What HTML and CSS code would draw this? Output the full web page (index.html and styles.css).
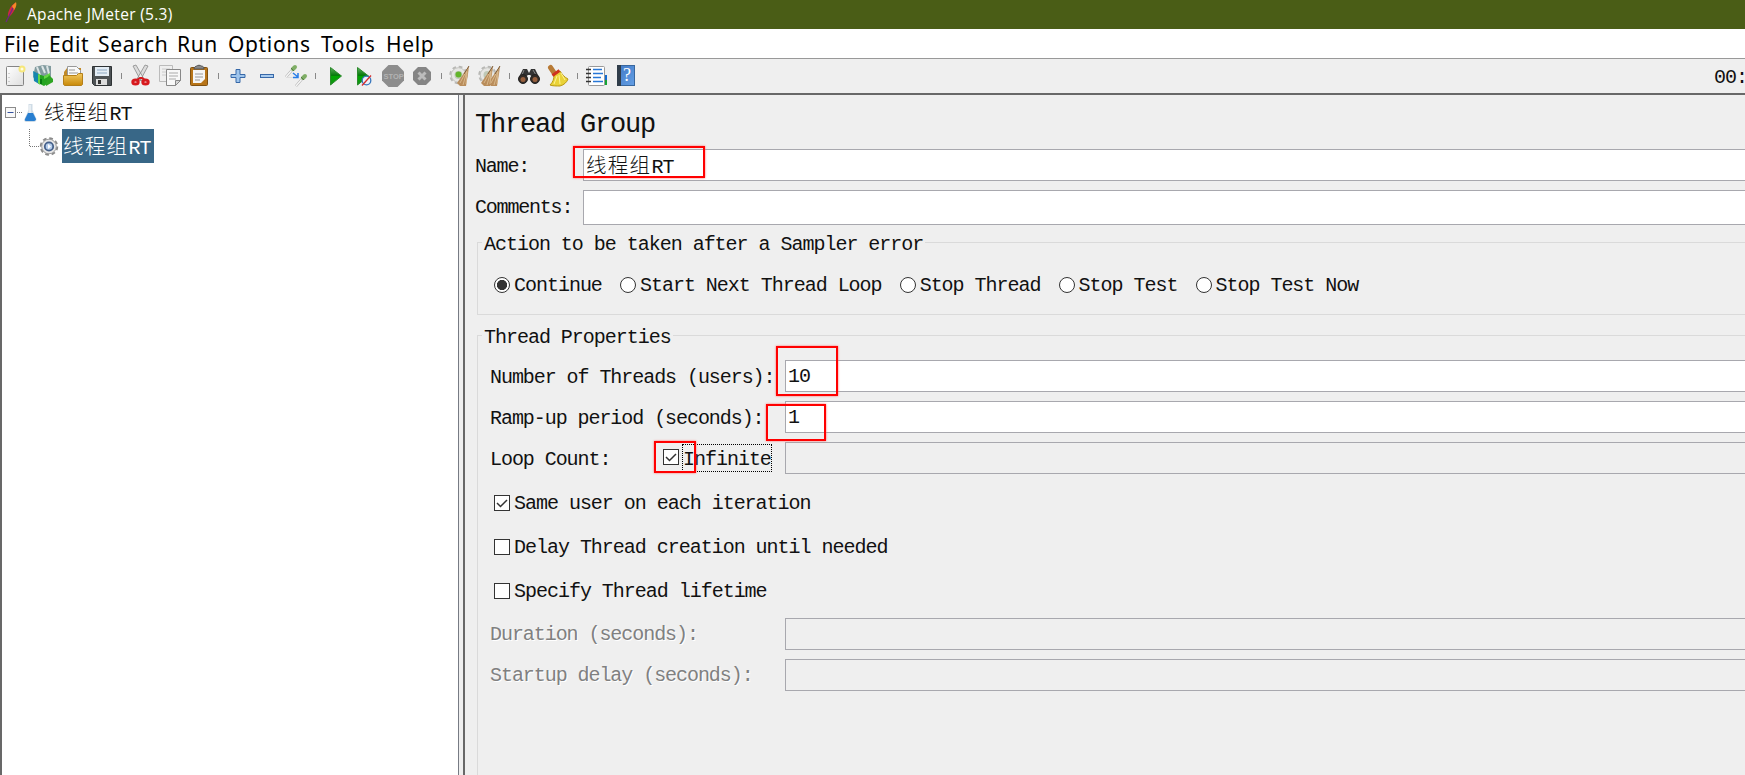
FILE: index.html
```
<!DOCTYPE html>
<html lang="zh-CN">
<head>
<meta charset="utf-8">
<title>Apache JMeter (5.3)</title>
<link rel="stylesheet" href="styles.css">
</head>
<body>
<div class="window">
  <header class="titlebar">
    <svg class="feather" width="14" height="22" viewBox="0 0 14 22"><path d="M3 15C2 10 6 3 10 1c2 3-1 9-5 13z" fill="#d02843"/><path d="M7 4l4-4c1 3 0 5-2 8z" fill="#f58a25"/><path d="M1 20L8 6" stroke="#6d2682" stroke-width="1.2"/></svg>
    <span>Apache JMeter (5.3)</span>
  </header>
  <nav class="menubar">
    <span class="m-file">File</span><span class="m-edit">Edit</span><span class="m-search">Search</span><span class="m-run">Run</span><span class="m-options">Options</span><span class="m-tools">Tools</span><span class="m-help">Help</span>
  </nav>
  <div class="toolbar">
    <svg class="icons" width="660" height="34" viewBox="0 59 660 34">
      <defs>
        <linearGradient id="paper" x2="1" y2="1"><stop stop-color="#fff"/><stop offset="1" stop-color="#dedede"/></linearGradient>
        <linearGradient id="play" x2="0" y2="1"><stop stop-color="#5faf5f"/><stop offset=".45" stop-color="#06780b"/><stop offset=".5" stop-color="#00a800"/><stop offset="1" stop-color="#169018"/></linearGradient>
        <linearGradient id="gold" x2="0" y2="1"><stop stop-color="#f2c860"/><stop offset="1" stop-color="#c88908"/></linearGradient>
        <linearGradient id="book" x2="1" y2="1"><stop stop-color="#3f78c5"/><stop offset="1" stop-color="#649fe5"/></linearGradient>
      </defs>
      <!-- new -->
      <rect x="6.500" y="66.500" width="17" height="19" rx="1" fill="url(#paper)" stroke="#858585"/><path d="M9 73v10" stroke="#aaa" stroke-dasharray="1 3"/><circle cx="22" cy="69" r="3.500" fill="#f6e77b"/><circle cx="22" cy="69" r="1.500" fill="#fffce0"/>
      <!-- templates -->
      <path d="M35 67l8-2 8 1v12l-13 4-5-5z" fill="#829b9f"/><path d="M37 67l3 8M42 66l3 7M47 66l2 8" stroke="#dce4e6" stroke-width="2"/><path d="M33 71l6 3v10l-5-3z" fill="#1686ae"/><path d="M38 74l6 2 6-2v8l-6 4-6-3z" fill="#25a421"/><path d="M38 74l2 1v10l-2-2zM44 76l6-3v3l-6 3z" fill="#65d646"/><path d="M40 79h2v5h-2z" fill="#087a11"/><path d="M49 75l4 4v3l-7 4v-3z" fill="#2ea523"/>
      <!-- open -->
      <path d="M64 72l3-4h14v14H64z" fill="#c18a28"/><path d="M67.500 66.500h9l4 4v7h-13z" fill="#fafafa" stroke="#999"/><path d="M69 70h6m-6 3h9" stroke="#999"/><path d="M63.500 75.500h13l2-2h4v11l-1 1h-17l-1-1z" fill="url(#gold)" stroke="#b5801a"/>
      <!-- save -->
      <path d="M92.500 66.500h19v19h-17l-2-2z" fill="#4d5255" stroke="#2e3234"/><rect x="95" y="67" width="14" height="9" fill="#e4edf5"/><path d="M97 70h10m-10 3h10" stroke="#8fa9c2"/><rect x="96" y="79" width="11" height="6" fill="#ddd"/><rect x="98" y="80" width="3" height="4" fill="#333"/>
      <!-- cut -->
      <path d="M133 66l3-1 8 14-3 2zM148 66l-3-1-8 14 3 2z" fill="#dcdcdc" stroke="#8a8a8a" stroke-width=".8"/><g fill="none" stroke="#d7191e" stroke-width="3"><ellipse cx="135.500" cy="82" rx="2.700" ry="2"/><ellipse cx="145.500" cy="82" rx="2.700" ry="2"/><path d="M137 80l3-2h2l3 2" stroke-width="2"/></g>
      <!-- copy -->
      <path d="M159.500 65.500h13v16h-13z" fill="#efefef" stroke="#bbb"/><path d="M162 69h8m-8 3h5m-5 3h4" stroke="#ccc"/><path d="M166.500 69.500h14v11l-5 5h-9z" fill="#f8f8f8" stroke="#888"/><path d="M169 73h9m-9 3h9m-9 3h7" stroke="#aaa"/><path d="M175.500 85.500v-5h5z" fill="#d6d6d6" stroke="#888"/>
      <!-- paste -->
      <rect x="190.500" y="67.500" width="17" height="18" rx="1" fill="#b87519" stroke="#805111"/><path d="M193 70h12v9l-4 4h-8z" fill="#f5f5f5"/><path d="M195 74h8m-8 3h8m-8 3h5" stroke="#999"/><path d="M194 69c0-2 2-3 3-3 0-1 4-1 4 0 2 0 3 1 3 3z" fill="#888" stroke="#555"/>
      <!-- expand / collapse -->
      <path d="M236 69.500h4v5h5v3h-5v5h-4v-5h-5v-3h5z" fill="#9fc5ec" stroke="#3768a8"/><rect x="260.500" y="74.500" width="13" height="3" fill="#a9cbee" stroke="#3768a8"/>
      <!-- toggle -->
      <g id="pipette"><path d="M286 77l6-7" stroke="#a8a8a8" stroke-width="2.500"/><path d="M286 77l6-7" stroke="#f6f6f6" stroke-width="1.500"/><path d="M293 69l2-2" stroke="#7fae65" stroke-width="4" stroke-linecap="round"/><path d="M291 68l3 3" stroke="#567c48"/></g><use href="#pipette" x="10" y="9"/><path d="M286 77.500h8" stroke="#ddd"/><path d="M293 73l5 4m0-4v4.500h-5" stroke="#287ee8" stroke-width="1.500" fill="none"/>
      <!-- run buttons -->
      <path d="M330.500 67.500l11 8.500-11 9z" fill="url(#play)" stroke="#2c8b2c"/><path d="M357.500 67.500l11 8.500-11 9z" fill="url(#play)" stroke="#2c8b2c"/><circle cx="366.500" cy="80.500" r="4.300" fill="#ecf2fa" stroke="#3776bd" stroke-width="1.300"/><path d="M362 85.500l9-10" stroke="#d72b2b" stroke-width="1.300"/>
      <path d="M388.500 65h9l6.500 6.500v9l-6.500 6.500h-9l-6.500-6.500v-9z" fill="#8d8d8d"/><text x="383.500" y="79" class="stop">STOP</text>
      <path d="M418 67h8l5 5v8l-5 5h-8l-5-5v-8z" fill="#858585"/><path d="M418.500 72.500l7 7m0-7l-7 7" stroke="#bcbcbc" stroke-width="3"/>
      <!-- clear and clear all -->
      <g id="gearbase"><circle cx="458.500" cy="75" r="8" fill="none" stroke="#b8b8b5" stroke-width="2.500" stroke-dasharray="3.600 2.680"/><circle cx="458.500" cy="75" r="7.300" fill="#e6e6e3" stroke="#c4c4c0"/><circle cx="458.500" cy="75" r="4" fill="#bfc8b6"/></g><circle cx="458.500" cy="74.500" r="3" fill="#62b52a"/>
      <g id="broom"><path d="M469 66l-5 7-7 10 3 3h6l2-12z" fill="#b98d5b"/><path d="M468 68l-8 15m7-12l-4 14m4-13l-1 12" stroke="#dfc297" stroke-width=".8"/><path d="M469 66l-5 8" stroke="#805e38"/></g>
      <use href="#gearbase" x="29"/><use href="#broom" x="31"/><use href="#broom" x="24"/>
      <!-- search -->
      <path d="M519 77l4-8 4 0 2 4 2-4h4l4 8-5 1-4-3h-2l-4 3z" fill="#343434"/><path d="M524 70l-2 5m11-5l3 5" stroke="#888"/><circle cx="523" cy="79" r="4.500" fill="#342c27" stroke="#222"/><circle cx="535" cy="79" r="4.500" fill="#342c27" stroke="#222"/><circle cx="523" cy="79.500" r="2.500" fill="#98603d"/><circle cx="535" cy="79.500" r="2.500" fill="#98603d"/>
      <!-- reset search -->
      <path d="M550.500 67.500l4 6" stroke="#b87a35" stroke-width="5" stroke-linecap="round"/><path d="M554 75l6-4c2 3 4 6 8 8-1 3-4 6-8 7-3 0-8 0-10-1 3-3 4-6 4-10z" fill="#e9d238" stroke="#ba9914"/><path d="M557 76l-3 8m5-9l1 9m1-11l4 7" stroke="#fff392"/><path d="M552.500 75.500l7-5" stroke="#cf321e" stroke-width="3"/>
      <!-- function helper -->
      <path d="M604 75h3v5h-3z" fill="#126bd1"/><path d="M604 80h3v5h-3z" fill="#15a335"/><rect x="588.500" y="66.500" width="16" height="19" rx="1" fill="#fff" stroke="#999"/><path d="M593 69.500h9m-9 4h10m-10 4h8m-8 4h10" stroke="#2877d6" stroke-width="1.500"/><path d="M586 69.500h5m-5 4h5m-5 4h5m-5 4h5" stroke="#333" stroke-width="1.500"/>
      <!-- help -->
      <rect x="617.500" y="65.500" width="17" height="20" fill="url(#book)" stroke="#38679e"/><path d="M617 65h4v21h-4z" fill="#303d4a"/><text x="623" y="81" class="q">?</text>
      <path d="M121.500 73v6m97-6v6m97-6v6m126-6v6m68-6v6m68-6v6" stroke="#888"/>
    </svg>
    <span class="clock">00:</span>
  </div>
  <main class="work">
    <aside class="tree">
      <div class="node root">
        <svg width="38" height="34" viewBox="0 0 38 34"><path d="M15 17.500h5" stroke="#777" stroke-dasharray="1 1"/><rect x="3.500" y="12.500" width="10" height="10" fill="#f8f8f8" stroke="#8b8b8b"/><path d="M5.500 17.500h6" stroke="#33519f"/><path d="M26.500 9h4v6l4 9q0 3-3 3h-7q-3 0-2-3l4-9z" fill="#cfdce6"/><path d="M26 18h5l3 6q0 2-3 2h-6q-3 0-2-2z" fill="#287ed0"/><path d="M28 10v8" stroke="#fff"/></svg>
        <span class="label"><span class="cjk">线程组</span>RT</span>
      </div>
      <div class="node child">
        <svg width="60" height="34" viewBox="0 0 60 34"><path d="M27.500 0v17.500h11" fill="none" stroke="#777" stroke-dasharray="1 1"/><circle cx="47" cy="17.500" r="8" fill="none" stroke="#8b8b8b" stroke-width="2.500" stroke-dasharray="3.600 2.680"/><circle cx="47" cy="17.500" r="7.300" fill="#e7e7e7" stroke="#a0a0a0"/><circle cx="47" cy="17.500" r="4.200" fill="#b5cdeb" stroke="#45608a" stroke-width="1.800"/><path d="M46 15l3 2.500-3 2.500z" fill="#fff"/></svg>
        <span class="label selected"><span class="cjk">线程组</span>RT</span>
      </div>
    </aside>
    <div class="divider"></div>
    <section class="panel">
      <h1>Thread Group</h1>
      <div class="row name"><label>Name:</label><div class="field"><span class="value"><span class="cjk">线程组</span>RT</span></div></div>
      <div class="row comments"><label>Comments:</label><div class="field"></div></div>
      <div class="group action">
        <div class="legend"><span>Action to be taken after a Sampler error</span></div>
        <div class="radios">
          <span class="opt"><i class="radio on"></i>Continue</span><span class="opt"><i class="radio"></i>Start Next Thread Loop</span><span class="opt"><i class="radio"></i>Stop Thread</span><span class="opt"><i class="radio"></i>Stop Test</span><span class="opt"><i class="radio"></i>Stop Test Now</span>
        </div>
      </div>
      <div class="group props">
        <div class="legend"><span>Thread Properties</span></div>
        <div class="fields">
          <div class="prow"><label>Number of Threads (users):</label><div class="field"><span class="value">10</span></div></div>
          <div class="prow"><label>Ramp-up period (seconds):</label><div class="field"><span class="value">1</span></div></div>
          <div class="prow"><label>Loop Count:</label><span class="opt infinite"><i class="box"><svg width="14" height="14"><path d="M2 7l3.500 3.500L12 4" fill="none" stroke="#333" stroke-width="1.500"/></svg></i><span class="focus">Infinite</span></span><div class="field off"></div></div>
        </div>
        <div class="checks">
          <span class="opt"><i class="box"><svg width="14" height="14"><path d="M2 7l3.500 3.500L12 4" fill="none" stroke="#333" stroke-width="1.500"/></svg></i>Same user on each iteration</span>
          <span class="opt"><i class="box"></i>Delay Thread creation until needed</span>
          <span class="opt"><i class="box"></i>Specify Thread lifetime</span>
        </div>
        <div class="fields disabled">
          <div class="prow"><label>Duration (seconds):</label><div class="field off"></div></div>
          <div class="prow"><label>Startup delay (seconds):</label><div class="field off"></div></div>
        </div>
      </div>
    </section>
  </main>
  <div class="mark mark-name"></div><div class="mark mark-threads"></div><div class="mark mark-ramp"></div><div class="mark mark-loop"></div>
</div>
</body>
</html>
```
FILE: styles.css
```
* { box-sizing: border-box; }
body { margin: 0; overflow: hidden; }
.window { position: relative; width: 1745px; height: 775px; overflow: hidden; display: flex; flex-direction: column; background: #efefef; color: #111; font: 20px/22px "Liberation Mono", "Noto Sans CJK SC", monospace; letter-spacing: -1.020px; white-space: nowrap; }
.titlebar { height: 29px; flex: none; display: flex; align-items: center; padding-left: 5px; background: #4a5d16; color: #fff; font: 15.5px/29px "Open Sans", sans-serif; letter-spacing: .3px; }
.feather { margin: -3px 8px 0 0; }
.menubar { height: 29px; flex: none; display: flex; padding-left: 4px; background: #fff; color: #000; font: 21px/30px "Noto Sans", sans-serif; letter-spacing: .65px; }
.m-file { width: 45px; } .m-edit { width: 49px; } .m-search { width: 79px; } .m-run { width: 51px; } .m-options { width: 93px; } .m-tools { width: 65px; }
.toolbar { height: 37px; flex: none; display: flex; justify-content: space-between; border-top: 1px solid #999; border-bottom: 2px solid #686868; overflow: hidden; }
.icons { flex: none; }
.stop { font: 700 7.5px "Liberation Sans", sans-serif; letter-spacing: 0; fill: #b3b3b3; }
.q { font: 18px "Liberation Serif", serif; letter-spacing: 0; fill: #fff; }
.clock { width: 31px; line-height: 37px; }
.work { flex: 1; display: flex; min-height: 0; }
.tree { width: 459px; flex: none; background: #fff; border-left: 2px solid #686868; border-right: 1px solid #777b84; }
.divider { width: 4px; flex: none; background: #efefef; }
.panel { flex: 1; min-width: 0; border-left: 2px solid #686868; }
.cjk { font-family: "Noto Sans CJK SC", sans-serif; font-weight: 300; font-size: 20.5px; letter-spacing: 1.3px; }
.node { height: 34px; display: flex; align-items: center; }
.node svg { flex: none; }
.root .label { margin-left: 4px; }
.label { height: 34px; line-height: 33px; }
.selected { width: 92px; padding-left: 1px; background: #386787; color: #fff; }
h1 { margin: 15px 0 0 10px; height: 33px; font: 27px/30px "Liberation Mono", monospace; letter-spacing: -1.200px; }
.row { display: flex; align-items: center; padding-left: 10px; }
.row label { width: 108px; flex: none; padding-top: 3px; letter-spacing: -1.2px; }
.row.name { margin-top: 6px; height: 32px; }
.row.comments { margin-top: 9px; height: 35px; }
.row.comments label { padding-top: 0; }
.field { flex: 1; align-self: stretch; display: flex; align-items: center; background: #fff; border: 1px solid #a8a8ae; border-right: 0; padding-left: 2px; }
.value { padding-top: 2px; }
.field.off { background: #efefef; }
.group { margin-left: 12px; border: 1px solid #dadada; border-right: 0; }
.action { margin-top: 17px; height: 73px; }
.props { margin-top: 20px; height: 460px; }
.legend { height: 22px; margin-top: -9px; padding-left: 4px; }
.legend span { display: inline-block; background: #efefef; padding: 0 2px; }
.radios { display: flex; gap: 18.1px; padding: 19px 0 0 16px; }
.opt { display: flex; align-items: center; height: 22px; }
.radio { width: 16px; height: 16px; flex: none; margin: -2px 4px 0 0; border: 1px solid #333; border-radius: 50%; background: #fff; }
.radio.on { background: radial-gradient(circle, #333 0 4.800px, #fff 5.400px); }
.box { width: 16px; height: 16px; flex: none; margin: -2px 4px 0 0; border: 1px solid #333; background: #fff; }
.box svg { display: block; }
.fields { display: grid; gap: 9px; padding: 11px 0 0 12px; }
.prow { display: flex; align-items: center; height: 32px; }
.prow label { width: 295px; flex: none; padding-top: 4px; letter-spacing: -1.060px; }
.prow label:has(+ .infinite) { width: 173px; }
.infinite { width: 122px; }
.focus { height: 26px; line-height: 30px; outline: 1px dotted #000; }
.checks { display: grid; gap: 22px; padding: 19px 0 0 16px; }
.disabled { padding-top: 15px; color: #808080; text-shadow: 1px 1px #fff; }
.disabled .prow label { padding-top: 2px; }
.mark { position: absolute; border: 2px solid #f00; box-shadow: 0 0 2px #f66; }
.mark-name { left: 573px; top: 146px; width: 132px; height: 32px; }
.mark-threads { left: 776px; top: 346px; width: 62px; height: 50px; }
.mark-ramp { left: 766px; top: 404px; width: 60px; height: 37px; }
.mark-loop { left: 654px; top: 441px; width: 42px; height: 32px; }
```
